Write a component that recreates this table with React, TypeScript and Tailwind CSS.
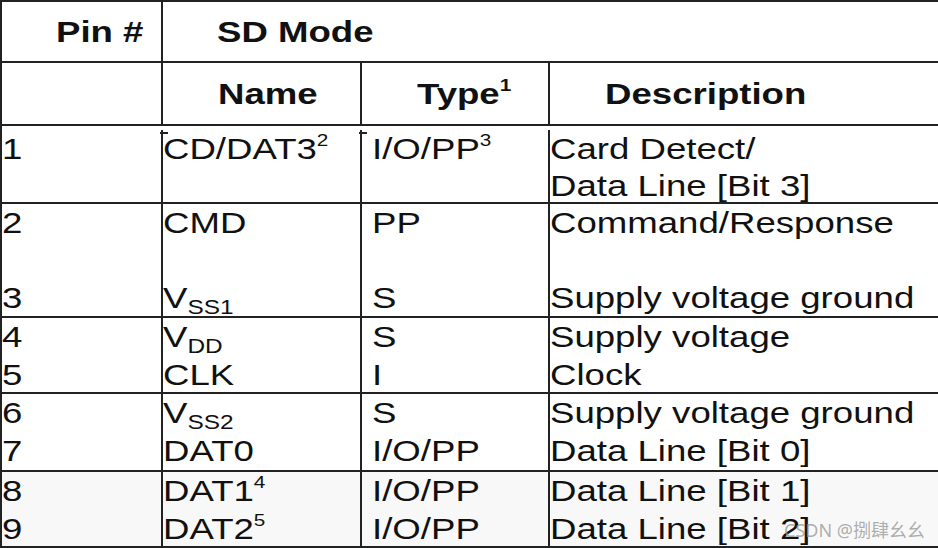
import React from "react";

function Sup({ children, bold }: { children: React.ReactNode; bold?: boolean }) {
    return (
        <span className={`relative -top-[13px] text-[17px] leading-none ${bold ? "font-bold" : ""}`}>
            {children}
        </span>
    );
}

function Sub({ children }: { children: React.ReactNode }) {
    return <span className="relative top-[6px] text-[20px] leading-none">{children}</span>;
}

type Cell = React.ReactNode[];
type Row = { box: string; pin: Cell; name: Cell; type: Cell; desc: Cell };

const nb = "\u00a0";

const rows: Row[] = [
    {
        box: "h-[78px] pt-[4px] leading-[37px]",
        pin: ["1"],
        name: [<>CD/DAT3<Sup>2</Sup></>],
        type: [<>I/O/PP<Sup>3</Sup></>],
        desc: ["Card Detect/", "Data Line [Bit 3]"],
    },
    {
        box: "h-[114px] leading-[37.5px]",
        pin: ["2", nb, "3"],
        name: ["CMD", nb, <>V<Sub>SS1</Sub></>],
        type: ["PP", nb, "S"],
        desc: ["Command/Response", nb, "Supply voltage ground"],
    },
    {
        box: "h-[76px] leading-[38px]",
        pin: ["4", "5"],
        name: [<>V<Sub>DD</Sub></>, "CLK"],
        type: ["S", "I"],
        desc: ["Supply voltage", "Clock"],
    },
    {
        box: "h-[78px] leading-[38px]",
        pin: ["6", "7"],
        name: [<>V<Sub>SS2</Sub></>, "DAT0"],
        type: ["S", "I/O/PP"],
        desc: ["Supply voltage ground", "Data Line [Bit 0]"],
    },
    {
        box: "h-[76px] leading-[38px] bg-[#f8f8f8]",
        pin: ["8", "9"],
        name: [<>DAT1<Sup>4</Sup></>, <>DAT2<Sup>5</Sup></>],
        type: ["I/O/PP", "I/O/PP"],
        desc: ["Data Line [Bit 1]", "Data Line [Bit 2]"],
    },
];

function Lines({ lines }: { lines: Cell }) {
    return (
        <>
            {lines.map((l, i) => (
                <span key={i} className="block origin-left scale-x-[1.22] whitespace-nowrap">
                    {l}
                </span>
            ))}
        </>
    );
}

function Tick() {
    return <span className="absolute left-[-3px] top-[2px] w-[8px] border-t-2 border-[#222]" />;
}

export default function App() {
    return (
        <div className="relative w-[938px] h-[548px] overflow-hidden bg-white text-[#111] text-[30px] font-['Liberation_Sans',Arial,sans-serif] border-t-2 border-l-2 border-[#222]">
            {/* header */}
            <div className="flex h-[61px] border-b-2 border-[#222] font-bold leading-[34px]">
                <div className="w-[161px] border-r-2 border-[#222] flex items-center pt-[1px] pl-[54px]">
                    <span className="block origin-left scale-x-[1.22] whitespace-nowrap">Pin #</span>
                </div>
                <div className="flex-1 flex items-center pt-[1px] pl-[54px]">
                    <span className="block origin-left scale-x-[1.22]">SD Mode</span>
                </div>
            </div>
            <div className="flex h-[63px] border-b-2 border-[#222] font-bold leading-[34px]">
                <div className="w-[161px] border-r-2 border-[#222]" />
                <div className="w-[199px] border-r-2 border-[#222] flex items-center pl-[55px]">
                    <span className="block origin-left scale-x-[1.22]">Name</span>
                </div>
                <div className="w-[188px] border-r-2 border-[#222] flex items-center pl-[55px]">
                    <span className="block origin-left scale-x-[1.22] whitespace-nowrap">
                        Type<Sup bold>1</Sup>
                    </span>
                </div>
                <div className="flex-1 flex items-center pl-[55px]">
                    <span className="block origin-left scale-x-[1.22]">Description</span>
                </div>
            </div>

            {/* body */}
            {rows.map((r, i) => (
                <div key={i} className={`flex border-b-2 border-[#222] ${r.box}`}>
                    <div className="relative w-[161px] border-r-2 border-[#222]">
                        <Lines lines={r.pin} />
                    </div>
                    <div className="relative w-[199px] border-r-2 border-[#222]">
                        {i === 0 && <Tick />}
                        <Lines lines={r.name} />
                    </div>
                    <div className="relative w-[188px] border-r-2 border-[#222] pl-[10px]">
                        {i === 0 && <Tick />}
                        <Lines lines={r.type} />
                    </div>
                    <div className="relative flex-1">
                        <Lines lines={r.desc} />
                    </div>
                </div>
            ))}

            {/* watermark over the last row */}
            <span className="absolute left-[782px] top-[515px] text-[18px] leading-[26px] text-[#9a9a9a]/80 font-['Noto_Sans','Noto_Sans_CJK_SC',sans-serif]">
                CSDN @捌肆幺幺
            </span>
        </div>
    );
}
